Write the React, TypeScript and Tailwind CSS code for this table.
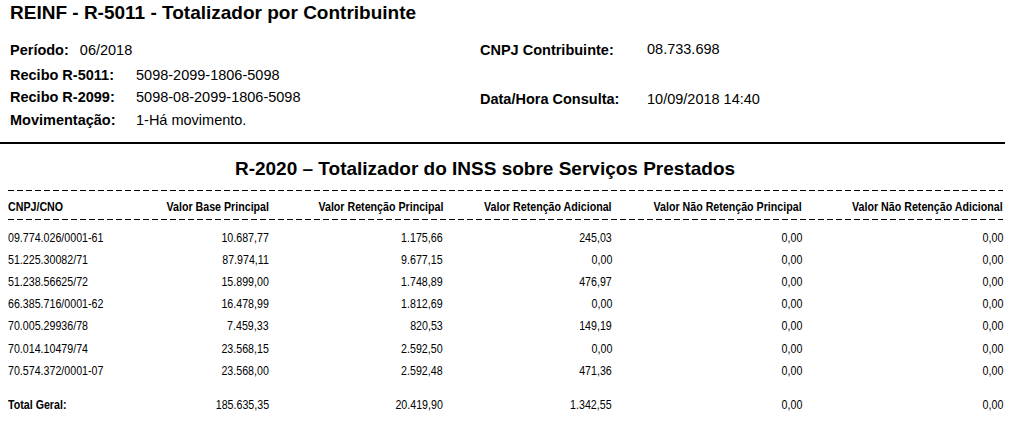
type Row = {
  doc: string;
  base: string;
  retPrincipal: string;
  retAdicional: string;
  naoRetPrincipal: string;
  naoRetAdicional: string;
};

const rows: Row[] = [
  { doc: "09.774.026/0001-61", base: "10.687,77", retPrincipal: "1.175,66", retAdicional: "245,03", naoRetPrincipal: "0,00", naoRetAdicional: "0,00" },
  { doc: "51.225.30082/71", base: "87.974,11", retPrincipal: "9.677,15", retAdicional: "0,00", naoRetPrincipal: "0,00", naoRetAdicional: "0,00" },
  { doc: "51.238.56625/72", base: "15.899,00", retPrincipal: "1.748,89", retAdicional: "476,97", naoRetPrincipal: "0,00", naoRetAdicional: "0,00" },
  { doc: "66.385.716/0001-62", base: "16.478,99", retPrincipal: "1.812,69", retAdicional: "0,00", naoRetPrincipal: "0,00", naoRetAdicional: "0,00" },
  { doc: "70.005.29936/78", base: "7.459,33", retPrincipal: "820,53", retAdicional: "149,19", naoRetPrincipal: "0,00", naoRetAdicional: "0,00" },
  { doc: "70.014.10479/74", base: "23.568,15", retPrincipal: "2.592,50", retAdicional: "0,00", naoRetPrincipal: "0,00", naoRetAdicional: "0,00" },
  { doc: "70.574.372/0001-07", base: "23.568,00", retPrincipal: "2.592,48", retAdicional: "471,36", naoRetPrincipal: "0,00", naoRetAdicional: "0,00" },
];

const total: Row = {
  doc: "Total Geral:",
  base: "185.635,35",
  retPrincipal: "20.419,90",
  retAdicional: "1.342,55",
  naoRetPrincipal: "0,00",
  naoRetAdicional: "0,00",
};

const cols = "grid grid-cols-[142px_119px_174px_169px_190px_201px]";

// sem Arial Narrow no sandbox: condensa a Liberation Sans
const Cell = ({ children, left, bold }: { children: React.ReactNode; left?: boolean; bold?: boolean }) => (
  <div className={`flex whitespace-nowrap ${left ? "justify-start" : "justify-end"}`}>
    <span className={`shrink-0 scale-x-[0.82] ${left ? "origin-left" : "origin-right"} ${bold ? "font-bold" : ""}`}>
      {children}
    </span>
  </div>
);

const Dashed = () => (
  <div className="h-px w-full bg-[repeating-linear-gradient(to_right,#000_0_6px,transparent_6px_9px)]" />
);

const DataRow = ({ row, bold }: { row: Row; bold?: boolean }) => (
  <div className={`${cols} h-[22.2px] text-[13px] leading-[22.2px]`}>
    <Cell left bold={bold}>{row.doc}</Cell>
    <Cell>{row.base}</Cell>
    <Cell>{row.retPrincipal}</Cell>
    <Cell>{row.retAdicional}</Cell>
    <Cell>{row.naoRetPrincipal}</Cell>
    <Cell>{row.naoRetAdicional}</Cell>
  </div>
);

export default function App() {
  return (
    <div className="h-[426px] w-[1017px] overflow-hidden bg-white font-['Liberation_Sans',Arial,sans-serif] text-black">
      <h1 className="pl-[10px] pt-[2px] text-[19px] font-bold leading-[22px]">
        REINF - R-5011 - Totalizador por Contribuinte
      </h1>

      {/* cabeçalho */}
      <div className="mt-[14px] flex text-[14.5px]">
        <div className="w-[480px] pl-[10px]">
          <div className="flex h-[25px] items-start leading-[24px]">
            <span className="font-bold">Período:</span>
            <span className="ml-[11px]">06/2018</span>
          </div>
          <div className="flex h-[22px] leading-[24px]">
            <span className="w-[126px] font-bold">Recibo R-5011:</span>
            <span>5098-2099-1806-5098</span>
          </div>
          <div className="flex h-[23px] leading-[24px]">
            <span className="w-[126px] font-bold">Recibo R-2099:</span>
            <span>5098-08-2099-1806-5098</span>
          </div>
          <div className="flex h-[24px] leading-[24px]">
            <span className="w-[126px] font-bold">Movimentação:</span>
            <span>1-Há movimento.</span>
          </div>
        </div>
        <div>
          <div className="flex h-[49px] leading-[24px]">
            <span className="w-[167px] font-bold">CNPJ Contribuinte:</span>
            <span className="-mt-px">08.733.698</span>
          </div>
          <div className="flex leading-[24px]">
            <span className="w-[167px] font-bold">Data/Hora Consulta:</span>
            <span>10/09/2018 14:40</span>
          </div>
        </div>
      </div>

      <div className="mt-[10px] h-[2px] w-[1005px] bg-black" />

      <h2 className="mt-[14px] w-[970px] text-center text-[19px] font-bold leading-[22px]">
        R-2020 – Totalizador do INSS sobre Serviços Prestados
      </h2>

      {/* tabela */}
      <div className="ml-[8px] mt-[10px] w-[995px]">
        <Dashed />
        <div className={`${cols} h-[28px] pt-[6px] text-[13px] leading-[20px]`}>
          <Cell left bold>CNPJ/CNO</Cell>
          <Cell bold>Valor Base Principal</Cell>
          <Cell bold>Valor Retenção Principal</Cell>
          <Cell bold>Valor Retenção Adicional</Cell>
          <Cell bold>Valor Não Retenção Principal</Cell>
          <Cell bold>Valor Não Retenção Adicional</Cell>
        </div>
        <Dashed />
        <div className="mt-[6.6px]">
          {rows.map((r) => (
            <DataRow key={r.doc} row={r} />
          ))}
        </div>
        <div className="mt-[12px]">
          <DataRow row={total} bold />
        </div>
      </div>
    </div>
  );
}
